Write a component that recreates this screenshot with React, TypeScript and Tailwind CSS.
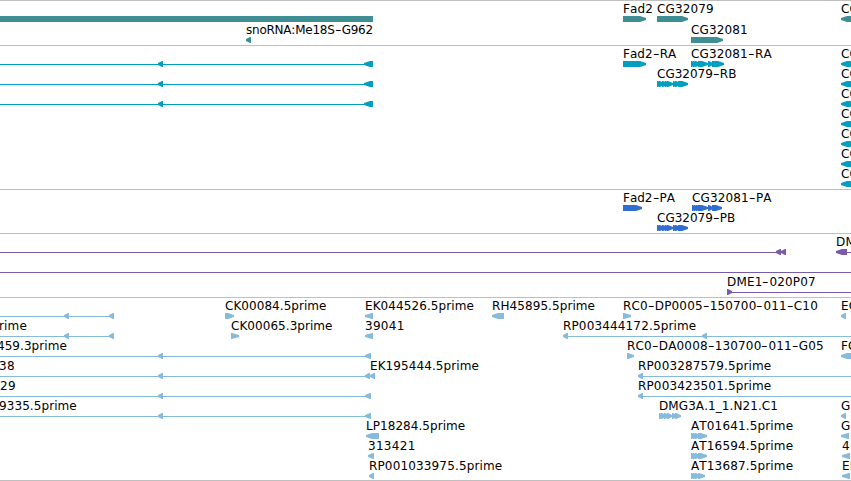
interface Label {
  x: number;
  text: string;
  spacing?: number;
}

interface Glyph {
  from: number;
  to: number;
  dir: "left" | "right";
}

interface Row {
  labels?: Label[];
  glyphs?: Glyph[];
  bars?: [number, number][];
  lines?: [number, number][];
}

interface Track {
  name: string;
  color: string;
  className: string;
  rows: Row[];
}

const WIDTH = 851;

const left = (from: number, to: number): Glyph => ({ from, to, dir: "left" });
const right = (from: number, to: number): Glyph => ({ from, to, dir: "right" });
const label = (x: number, text: string, spacing?: number): Label => ({ x, text, spacing });

// CG32079 and CG32081 are split into several short exons
const cg32079 = [
  right(657, 661),
  right(659, 664),
  right(662, 668),
  right(665, 669),
  right(667, 673),
  right(673, 677),
  right(675, 680),
  right(678, 688),
];

const transcriptIntron: Row = {
  lines: [[0, 366]],
  glyphs: [left(158, 163), left(364, 373), left(841, 856)],
  labels: [label(841, "CG")],
};

const cgOnly: Row = {
  labels: [label(841, "CG")],
  glyphs: [left(841, 856)],
};

const tracks: Track[] = [
  {
    name: "genes",
    color: "#3f8e94",
    className: "gap-px pb-0.5",
    rows: [
      {
        labels: [label(623, "Fad2"), label(657, "CG32079"), label(841, "CG")],
        bars: [[0, 373]],
        glyphs: [right(623, 646), right(657, 688), left(841, 860)],
      },
      {
        labels: [label(246, "snoRNA:Me18S-G962", -0.23), label(691, "CG32081")],
        glyphs: [left(246, 251), right(691, 723)],
      },
    ],
  },
  {
    name: "transcripts",
    color: "#009fc0",
    className: "pb-0.5",
    rows: [
      {
        ...transcriptIntron,
        labels: [label(623, "Fad2-RA", 0.05), label(691, "CG32081-RA"), label(841, "CG")],
        glyphs: [
          ...transcriptIntron.glyphs!,
          right(623, 646),
          right(691, 695),
          right(693, 697),
          right(695, 700),
          right(698, 708),
          right(708, 713),
          right(712, 724),
        ],
      },
      {
        ...transcriptIntron,
        labels: [label(657, "CG32079-RB", 0), label(841, "CG")],
        glyphs: [...transcriptIntron.glyphs!, ...cg32079],
      },
      transcriptIntron,
      cgOnly,
      cgOnly,
      cgOnly,
      cgOnly,
    ],
  },
  {
    name: "proteins",
    color: "#306fcf",
    className: "pb-0.5",
    rows: [
      {
        labels: [label(623, "Fad2-PA", 0), label(692, "CG32081-PA")],
        glyphs: [
          right(623, 642),
          right(692, 696),
          right(694, 698),
          right(696, 701),
          right(698, 708),
          right(708, 713),
          right(712, 722),
        ],
      },
      { labels: [label(657, "CG32079-PB", 0)], glyphs: cg32079 },
    ],
  },
  {
    name: "insertions",
    color: "#7a5aaa",
    className: "pb-0.5",
    rows: [
      {
        labels: [label(836, "DME")],
        lines: [[0, 778], [846, 851]],
        glyphs: [left(776, 781), left(781, 786), left(836, 847)],
      },
      { lines: [[0, 851]] },
      {
        labels: [label(727, "DME1-020P07")],
        lines: [[730, 851]],
        glyphs: [right(727, 732)],
      },
    ],
  },
  {
    name: "ests",
    color: "#87bbdd",
    className: "pb-px",
    rows: [
      {
        labels: [
          label(225, "CK00084.5prime", 0.05),
          label(365, "EK044526.5prime", 0.08),
          label(492, "RH45895.5prime", 0.08),
          label(623, "RC0-DP0005-150700-011-C10"),
          label(841, "EC"),
        ],
        lines: [[0, 112]],
        glyphs: [
          left(64, 69),
          left(109, 114),
          right(225, 234),
          left(365, 373),
          left(492, 504),
          right(623, 631),
          left(841, 846),
        ],
      },
      {
        labels: [
          label(-1, "rime"),
          label(231, "CK00065.3prime", 0.05),
          label(365, "39041", 0.3),
          label(563, "RP003444172.5prime"),
        ],
        lines: [[0, 112], [565, 851]],
        glyphs: [left(64, 69), left(109, 114), right(231, 239), left(365, 373), left(563, 568), left(702, 707)],
      },
      {
        labels: [label(-3, "459.3prime", 0.05), label(627, "RC0-DA0008-130700-011-G05"), label(841, "FC")],
        lines: [[0, 368]],
        glyphs: [left(158, 163), left(365, 371), right(627, 634), left(841, 856)],
      },
      {
        labels: [label(-1, "38", 0.3), label(370, "EK195444.5prime", 0.08), label(638, "RP003287579.5prime")],
        lines: [[0, 368], [640, 851]],
        glyphs: [left(158, 163), left(365, 370), left(370, 375), left(638, 643)],
      },
      {
        labels: [label(0, "29", 0.3), label(638, "RP003423501.5prime")],
        lines: [[0, 368], [640, 851]],
        glyphs: [left(158, 163), left(365, 371), left(638, 643)],
      },
      {
        labels: [label(-1, "9335.5prime", 0.08), label(659, "DMG3A.1_1.N21.C1", 0.08), label(841, "G")],
        lines: [[0, 368]],
        glyphs: [
          left(158, 163),
          left(365, 371),
          right(659, 663),
          right(661, 666),
          right(664, 669),
          right(667, 672),
          right(672, 677),
          right(675, 681),
          left(841, 846),
        ],
      },
      {
        labels: [label(366, "LP18284.5prime", 0.05), label(691, "AT01641.5prime"), label(841, "G")],
        glyphs: [left(366, 379), right(691, 695), right(693, 697), right(695, 700), right(698, 707), left(841, 849)],
      },
      {
        labels: [label(368, "313421", 0.3), label(691, "AT16594.5prime"), label(842, "4")],
        glyphs: [left(368, 374), right(691, 695), right(693, 697), right(695, 700), right(698, 707), left(842, 850)],
      },
      {
        labels: [label(369, "RP001033975.5prime"), label(691, "AT13687.5prime"), label(842, "EK")],
        glyphs: [left(369, 374), right(691, 695), right(693, 697), right(695, 700), right(698, 705), left(842, 850)],
      },
    ],
  },
];

// body with a blunt arrow head, 6px high
function glyphPoints({ from, to, dir }: Glyph) {
  const width = to - from;
  const head = width > 8 ? 6 : width - 1;
  const mid = head / 2;
  if (dir === "left") {
    return `${to},0 ${from + head},0 ${from + mid},1 ${from},2 ${from},4 ${from + mid},5 ${from + head},6 ${to},6`;
  }
  return `${from},0 ${to - head},0 ${to - mid},1 ${to},2 ${to},4 ${to - mid},5 ${to - head},6 ${from},6`;
}

function LabelText({ text }: { text: string }) {
  return text.split(/(-)/).map((part, i) =>
    part === "-" ? (
      <span key={i} className="inline-block w-[7px] origin-left scale-x-150">
        -
      </span>
    ) : (
      part
    )
  );
}

function FeatureRow({ row, color }: { row: Row; color: string }) {
  return (
    <div className="h-5">
      <div className="relative h-3.5">
        {row.labels?.map((l) => (
          <span
            key={l.x}
            className="absolute top-0 whitespace-nowrap text-[12px] leading-[14px] [font-kerning:none]"
            style={{ left: l.x, letterSpacing: l.spacing ?? 0.15 }}
          >
            <LabelText text={l.text} />
          </span>
        ))}
      </div>
      <svg width={WIDTH} height={6} className="block" fill={color}>
        {row.lines?.map(([a, b]) => (
          <rect key={a} x={a} y={3} width={b - a} height={1} />
        ))}
        {row.bars?.map(([a, b]) => (
          <rect key={a} x={a} y={0} width={b - a} height={6} />
        ))}
        {row.glyphs?.map((g) => (
          <polygon key={g.from} points={glyphPoints(g)} />
        ))}
      </svg>
    </div>
  );
}

export default function App() {
  return (
    <main className="flex h-[481px] w-[851px] flex-col overflow-hidden border-b border-[#bfbfbf] bg-white font-['DejaVu_Sans',sans-serif] text-black">
      {tracks.map((track) => (
        <section key={track.name} className={`flex flex-col border-t border-[#bfbfbf] pt-px ${track.className}`}>
          {track.rows.map((row, i) => (
            <FeatureRow key={i} row={row} color={track.color} />
          ))}
        </section>
      ))}
    </main>
  );
}
